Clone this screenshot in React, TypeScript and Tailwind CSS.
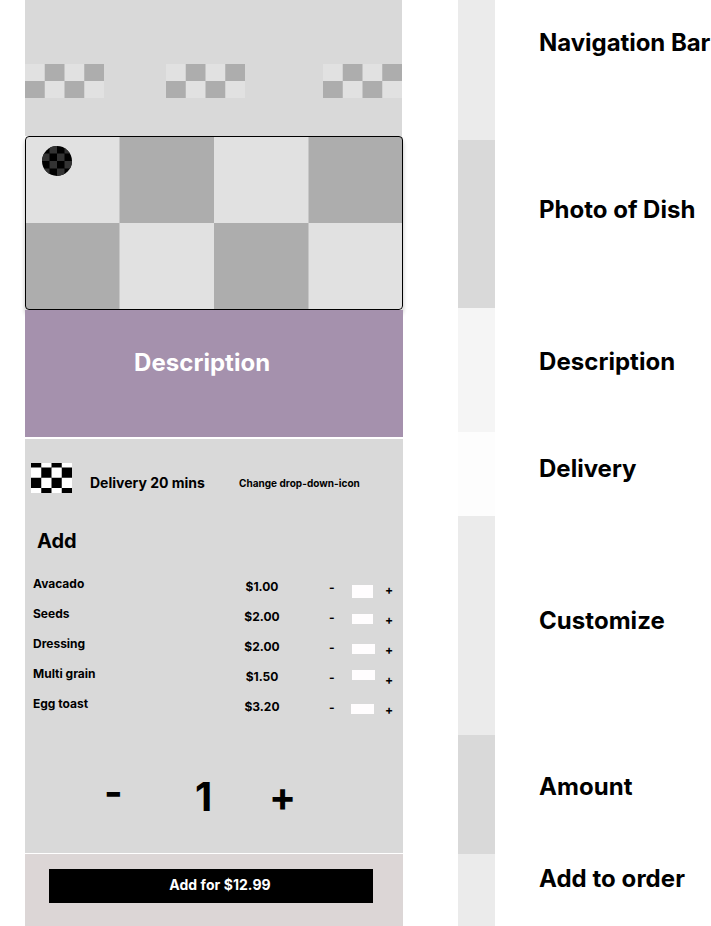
type CheckerProps = {
  width: number;
  height: number;
  cell: [number, number];
  offsetY?: number;
  colors: [string, string];
  className?: string;
};

// Checkerboard placeholder: first colour fills the top-left cell.
function Checker({ width, height, cell, offsetY = 0, colors, className = "" }: CheckerProps) {
  const [cw, ch] = cell;
  const cells = [];
  for (let r = 0; offsetY + r * ch < height; r++) {
    for (let c = 0; c * cw < width - 0.01; c++) {
      if ((r + c) % 2 === 1) {
        cells.push(<rect key={`${r}-${c}`} x={c * cw} y={offsetY + r * ch} width={cw} height={ch} fill={colors[1]} />);
      }
    }
  }
  return (
    <svg width={width} height={height} viewBox={`0 0 ${width} ${height}`} className={`block shrink-0 ${className}`}>
      <rect width={width} height={height} fill={colors[0]} />
      {cells}
    </svg>
  );
}

const GREYS: [string, string] = ["#e1e1e1", "#adadad"];

const items = [
  { name: "Avacado", price: "$1.00", box: "mt-4 h-[13px] w-[21px]" },
  { name: "Seeds", price: "$2.00", box: "mt-[15px] h-[10px] w-[21px]" },
  { name: "Dressing", price: "$2.00", box: "mt-[15px] h-[10px] w-[23px]" },
  { name: "Multi grain", price: "$1.50", box: "mt-[11px] h-[10px] w-[23px]" },
  { name: "Egg toast", price: "$3.20", box: "mt-[15px] -ml-px h-[10px] w-[23px]" },
];

const sections = [
  { label: "Navigation Bar", strip: "h-[140px] bg-[#ebebeb]", text: "pt-7 tracking-[-0.05px]" },
  { label: "Photo of Dish", strip: "h-[168px] bg-[#d9d9d9]", text: "pt-[55px]" },
  { label: "Description", strip: "h-[124px] bg-[#f5f5f5]", text: "pt-[39px] tracking-[0.05px]" },
  { label: "Delivery", strip: "h-[84px] bg-[#fdfdfd]", text: "pt-[22px]" },
  { label: "Customize", strip: "h-[219px] bg-[#ebebeb]", text: "pt-[90px] tracking-[0.05px]" },
  { label: "Amount", strip: "h-[119px] bg-[#d9d9d9]", text: "pt-[37px] tracking-[0.05px]" },
  { label: "Add to order", strip: "h-[72px] bg-[#ebebeb]", text: "pt-[10px] tracking-[0.05px]" },
];

export default function App() {
  return (
    <div className="flex h-[926px] w-[711px] overflow-hidden bg-white pl-[25px] font-['Inter',sans-serif] font-bold text-black">
      <main className="flex w-[378px] shrink-0 flex-col">
        <nav className="flex h-[136px] w-[377px] shrink-0 bg-[#d9d9d9] pt-16">
          <Checker width={79} height={34} cell={[19.75, 17]} colors={GREYS} />
          <Checker width={79} height={34} cell={[19.75, 17]} colors={GREYS} className="ml-[62px]" />
          <Checker width={79} height={34} cell={[19.75, 17]} colors={GREYS} className="ml-[78px]" />
        </nav>

        <div className="relative h-[174px] shrink-0 overflow-hidden rounded-[4px] shadow-[0_4px_4px_rgba(0,0,0,0.25)]">
          <Checker width={378} height={174} cell={[94.5, 87]} colors={GREYS} />
          <div className="absolute inset-0 rounded-[4px] border border-black" />
          <div className="absolute left-[17px] top-[10px] overflow-hidden rounded-full">
            <Checker width={30} height={30} cell={[7.5, 7.5]} colors={["#000000", "#333333"]} />
          </div>
        </div>

        <section className="relative h-[127px] shrink-0 bg-[#a591ad] pl-[109px] pt-[38px]">
          <h2 className="text-2xl leading-[29px] tracking-[0.05px] text-white">Description</h2>
        </section>

        <section className="mt-[2px] h-[414px] shrink-0 bg-[#d9d9d9]">
          <div className="flex h-[90px] pl-[6px] pt-6">
            <Checker width={41} height={30} cell={[10.25, 10.25]} offsetY={-5.75} colors={["#000000", "#ffffff"]} />
            <p className="ml-[18px] mt-[10px] w-[149px] whitespace-nowrap text-sm leading-5">Delivery 20 mins</p>
            <p className="mt-[10px] whitespace-nowrap text-[10px] leading-5 tracking-[0.03px]">Change drop-down-icon</p>
          </div>
          <h3 className="h-10 pl-3 text-xl leading-6">Add</h3>
          <ul className="h-[150px] text-xs leading-5">
            {items.map((item) => (
              <li key={item.name} className="flex h-[30px] items-start pl-2">
                <span className="mt-[5px] w-[208px]">{item.name}</span>
                <span className="mt-2 w-[42px] text-center">{item.price}</span>
                <span className="ml-[46px] mt-[9px] w-[23px]">-</span>
                <span className="w-[33px]">
                  <span className={`block bg-[#fffdfe] ${item.box}`} />
                </span>
                <span className="mt-[11px]">+</span>
              </li>
            ))}
          </ul>
          <div className="flex items-start pt-[49px] text-[40px] leading-[48px]">
            <span className="ml-[79px] w-[91px]">-</span>
            <span className="mt-[5px] w-[74px]">1</span>
            <span className="mt-[5px]">+</span>
          </div>
        </section>

        <footer className="mt-px h-[72px] shrink-0 bg-[#dcd6d6] pl-6 pt-[15px]">
          <button className="block h-[34px] w-[324px] bg-black pb-[2px] pl-[18px] text-sm leading-8 tracking-[0.05px] text-white">
            Add for $12.99
          </button>
        </footer>
      </main>

      <aside className="ml-[55px] flex w-[253px] shrink-0 flex-col">
        {sections.map((s) => (
          <div key={s.label} className="flex">
            <div className={`w-[37px] shrink-0 ${s.strip}`} />
            <h2 className={`ml-11 whitespace-nowrap text-2xl leading-[29px] ${s.text}`}>{s.label}</h2>
          </div>
        ))}
      </aside>
    </div>
  );
}
